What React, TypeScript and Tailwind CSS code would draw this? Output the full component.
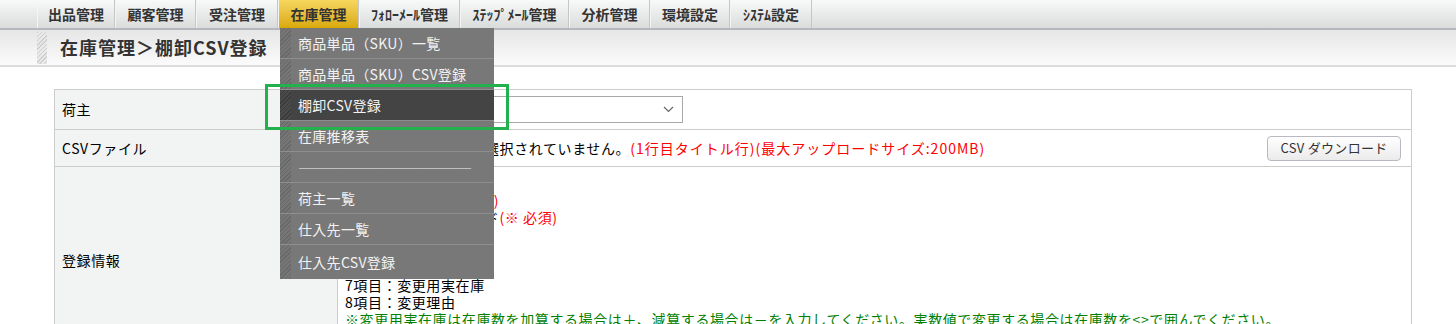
import React from "react";

const navItems = [
  { label: "出品管理", w: "w-[78px]" },
  { label: "顧客管理", w: "w-[81px]" },
  { label: "受注管理", w: "w-[82px]" },
  { label: "在庫管理", w: "w-[81px]", active: true },
  { label: "ﾌｫﾛｰﾒｰﾙ管理", w: "w-[101px]" },
  { label: "ｽﾃｯﾌﾟﾒｰﾙ管理", w: "w-[109px]" },
  { label: "分析管理", w: "w-[81px]" },
  { label: "環境設定", w: "w-[80px]" },
  { label: "ｼｽﾃﾑ設定", w: "w-[82px]" },
];

const menuItems = [
  { label: "商品単品（SKU）一覧" },
  { label: "商品単品（SKU）CSV登録" },
  { label: "棚卸CSV登録", current: true },
  { label: "在庫推移表" },
  { label: "―――――――――――――", divider: true },
  { label: "荷主一覧" },
  { label: "仕入先一覧" },
  { label: "仕入先CSV登録", last: true },
];

function StockMenu() {
  return (
    <div className="absolute left-[1px] top-full z-20 w-[214px] bg-[#787878] font-normal">
      {menuItems.map((item, i) => (
        <div
          key={i}
          className={`flex border-b border-[#8e8e8e] ${item.last ? "h-[34px] border-b-0" : "h-[31px]"} ${
            item.current ? "bg-[#444444]" : ""
          }`}
        >
          <div
            className={`w-[11px] shrink-0 ${
              item.current
                ? "bg-[repeating-linear-gradient(135deg,#3a3a3a_0px,#3a3a3a_1px,#4a4a4a_1px,#4a4a4a_3px)]"
                : "bg-[repeating-linear-gradient(135deg,#686868_0px,#686868_1px,#767676_1px,#767676_3px)]"
            }`}
          />
          <div
            className={`flex items-center pl-[7px] text-[14px] text-[#f2f2f2] ${
              item.divider ? "tracking-[-2px] text-[#e6e6e6]" : "tracking-[0.3px]"
            }`}
          >
            {item.label}
          </div>
        </div>
      ))}
    </div>
  );
}

export default function App() {
  return (
    <div
      className="relative h-[324px] w-[1456px] overflow-hidden bg-white text-black"
      style={{ fontFamily: '"Noto Sans CJK JP", "Noto Sans", sans-serif' }}
    >
      {/* global nav */}
      <nav className="flex h-[30px] border-b-2 border-[#b6b6be] bg-gradient-to-b from-[#f8fafa] to-[#dadbdb] pl-[37px]">
        {navItems.map((n) => (
          <div
            key={n.label}
            className={`relative flex h-full ${n.w} items-center justify-center border-l border-l-[#f4f4f4] border-r border-r-[#c6c6c6] text-[14px] font-bold text-[#333] ${
              n.active ? "bg-gradient-to-b from-[#f6d65c] to-[#d9a900]" : ""
            }`}
          >
            {n.label}
            {n.active && <StockMenu />}
          </div>
        ))}
      </nav>

      {/* page title */}
      <div className="flex h-[37px] items-center border-b-2 border-[#dddddd] bg-gradient-to-b from-[#e6e6e6] to-[#fbfbfb] pl-[37px]">
        <div className="h-[32px] w-[10px] bg-[repeating-linear-gradient(135deg,#cfcfcf_0px,#cfcfcf_1px,#e9e9e9_1px,#e9e9e9_3px)]" />
        <h1 className="pl-[13px] text-[18px] font-bold tracking-[1px] text-[#333]">在庫管理＞棚卸CSV登録</h1>
      </div>

      {/* form table */}
      <div className="ml-[54px] mt-[22px] w-[1358px] border border-[#cccccc] text-[14px] tracking-[0.6px]">
        <div className="flex h-[40px] border-b border-[#cccccc]">
          <div className="flex w-[283px] shrink-0 items-center border-r border-[#cccccc] bg-[#f2f3f3] pl-[7px]">荷主</div>
          <div className="flex items-center pl-[7px]">
            <div className="flex h-[27px] w-[338px] items-center justify-end border border-[#a9a9a9] bg-white pr-[8px]">
              <svg width="11" height="7" viewBox="0 0 11 7" fill="none" stroke="#666" strokeWidth="1.2">
                <path d="M1 1l4.5 4.5L10 1" />
              </svg>
            </div>
          </div>
        </div>

        <div className="flex h-[37px] border-b border-[#cccccc]">
          <div className="flex w-[283px] shrink-0 items-center border-r border-[#cccccc] bg-[#f2f3f3] pl-[7px]">CSVファイル</div>
          <div className="flex flex-1 items-center justify-between pl-[7px] pr-[10px]">
            <div className="flex items-center">
              <button className="mr-[6px] h-[22px] w-[134px] rounded-[3px] border border-[#999] bg-[#efefef] text-[13px]">ファイルを選択</button>
              <span>選択されていません。</span>
              <span className="tracking-[1px] text-[#ff0000]">(1行目タイトル行)(最大アップロードサイズ:200MB)</span>
            </div>
            <button className="h-[25px] w-[134px] rounded-[4px] border border-[#b9b9c2] bg-gradient-to-b from-white to-[#ebebeb] text-[13px] tracking-[0.3px] text-[#333]">
              CSV ダウンロード
            </button>
          </div>
        </div>

        <div className="flex h-[186px]">
          <div className="flex w-[283px] shrink-0 items-center border-r border-[#cccccc] bg-[#f2f3f3] pl-[7px]">登録情報</div>
          <div className="pl-[7px] pt-[8px] leading-[17px]">
            <div>1項目：荷主コード</div>
            <div>
              2項目：倉庫名称 <span className="text-[#ff0000]">(任意)</span>
            </div>
            <div>
              3項目：商品単品コード<span className="text-[#ff0000]">(※ 必須)</span>
            </div>
            <div>4項目：商品名</div>
            <div>5項目：現在庫</div>
            <div>6項目：引当数</div>
            <div>7項目：変更用実在庫</div>
            <div>8項目：変更理由</div>
            <div className="text-[#008000]">
              ※変更用実在庫は在庫数を加算する場合は＋、減算する場合は－を入力してください。実数値で変更する場合は在庫数を&lt;&gt;で囲んでください。
            </div>
            <div className="text-[#008000]">※CSVファイルは1行目をタイトル行として作成してください。</div>
          </div>
        </div>
      </div>

      {/* highlight annotation */}
      <div className="pointer-events-none absolute left-[265px] top-[84px] z-30 h-[46px] w-[244px] border-[3px] border-[#22b14c]" />
    </div>
  );
}
